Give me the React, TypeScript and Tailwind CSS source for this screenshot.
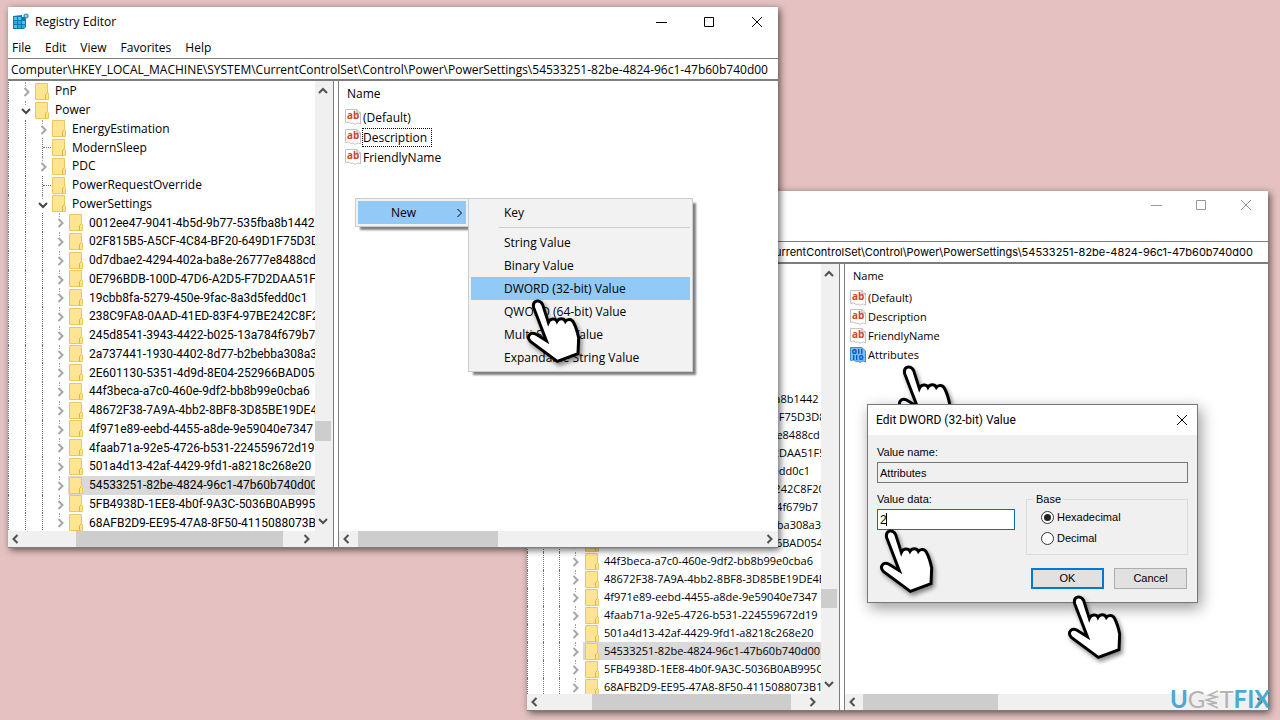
import React from 'react';
import clsx from 'clsx';

type Size = 'lg' | 'sm';

interface TreeNode {
    name: string;
    level: number;
    state: 'open' | 'closed' | 'leaf';
    selected?: boolean;
}

interface RegistryValue {
    name: string;
    kind: 'string' | 'binary';
    focused?: boolean;
}

const PATH = 'Computer\\HKEY_LOCAL_MACHINE\\SYSTEM\\CurrentControlSet\\Control\\Power\\PowerSettings\\54533251-82be-4824-96c1-47b60b740d00';

const guids = [
    '0012ee47-9041-4b5d-9b77-535fba8b1442',
    '02F815B5-A5CF-4C84-BF20-649D1F75D3D8',
    '0d7dbae2-4294-402a-ba8e-26777e8488cd',
    '0E796BDB-100D-47D6-A2D5-F7D2DAA51F51',
    '19cbb8fa-5279-450e-9fac-8a3d5fedd0c1',
    '238C9FA8-0AAD-41ED-83F4-97BE242C8F20',
    '245d8541-3943-4422-b025-13a784f679b7',
    '2a737441-1930-4402-8d77-b2bebba308a3',
    '2E601130-5351-4d9d-8E04-252966BAD054',
    '44f3beca-a7c0-460e-9df2-bb8b99e0cba6',
    '48672F38-7A9A-4bb2-8BF8-3D85BE19DE4E',
    '4f971e89-eebd-4455-a8de-9e59040e7347',
    '4faab71a-92e5-4726-b531-224559672d19',
    '501a4d13-42af-4429-9fd1-a8218c268e20',
    '54533251-82be-4824-96c1-47b60b740d00',
    '5FB4938D-1EE8-4b0f-9A3C-5036B0AB995C',
    '68AFB2D9-EE95-47A8-8F50-4115088073B1',
];

const tree: TreeNode[] = [
    { name: 'PnP', level: 0, state: 'closed' },
    { name: 'Power', level: 0, state: 'open' },
    { name: 'EnergyEstimation', level: 1, state: 'closed' },
    { name: 'ModernSleep', level: 1, state: 'leaf' },
    { name: 'PDC', level: 1, state: 'closed' },
    { name: 'PowerRequestOverride', level: 1, state: 'leaf' },
    { name: 'PowerSettings', level: 1, state: 'open' },
    ...guids.map((name): TreeNode => ({ name, level: 2, state: 'closed', selected: name.startsWith('54533251') })),
];

const firstValues: RegistryValue[] = [
    { name: '(Default)', kind: 'string' },
    { name: 'Description', kind: 'string', focused: true },
    { name: 'FriendlyName', kind: 'string' },
];

const secondValues: RegistryValue[] = [
    { name: '(Default)', kind: 'string' },
    { name: 'Description', kind: 'string' },
    { name: 'FriendlyName', kind: 'string' },
    { name: 'Attributes', kind: 'binary' },
];

const chevrons = {
    left: 'M7.5 2 3.5 6l4 4',
    right: 'M4.5 2l4 4-4 4',
    up: 'M2 8l4-4 4 4',
    down: 'M2 4l4 4 4-4',
};

function Chevron({ dir, className, width = 2 }: { dir: keyof typeof chevrons; className: string; width?: number }) {
    return (
        <svg viewBox="0 0 12 12" className={className} fill="none" stroke="currentColor" strokeWidth={width}>
            <path d={chevrons[dir]} />
        </svg>
    );
}

function AppIcon() {
    return (
        <svg viewBox="0 0 17 17" className="h-[17px] w-[17px]">
            <path d="M1 3l9-1v2h4v10l-2 2H1z" fill="#0f7ab0" />
            <path d="M2 4h3v3H2zM2 12h3v3H2zM6 4h3v3H6zM10 8h3v3h-3z" fill="#4cc3ee" />
            <path d="M2 8h3v3H2zM6 8h3v3H6zM6 12h3v3H6zM10 12h3v3h-3z" fill="#2ea9dc" />
            <circle cx="14" cy="3" r="2" fill="#8fdcf7" stroke="#1688bd" strokeWidth="1.200" />
        </svg>
    );
}

function FolderIcon() {
    return (
        <svg viewBox="0 0 14 17" className="h-[17px] w-[14px] shrink-0">
            <path d="M.5.5h12v9l1 1v6H.5z" fill="#ffe592" stroke="#ecc85c" />
            <path d="M10.500 16.500v-5l2-2" fill="none" stroke="#dfb53f" />
        </svg>
    );
}

function ValueIcon({ kind }: { kind: RegistryValue['kind'] }) {
    const binary = kind === 'binary';
    return (
        <svg viewBox="0 0 16 16" className="h-4 w-4 shrink-0">
            <path
                d="M.5.5h11.500l3.500 3.500v11l-2-1-2 .5-1.500 1-2-1.500-2 .5-2-1.500-3.500.5z"
                fill={binary ? '#7dbcf2' : '#fff'}
                stroke={binary ? '#3c8fd6' : '#c3c3c3'}
            />
            {binary ? (
                <g fill="none" stroke="#0a58c0" strokeWidth="1.400">
                    <rect x="3" y="2.700" width="3" height="3.600" rx="1" />
                    <path d="M8.700 2v5M11.700 2v5M3.700 8v5M6.700 8v5" />
                    <rect x="9.700" y="8.700" width="3" height="3.600" rx="1" />
                </g>
            ) : (
                <>
                    <path d="M12 .5v3.500h3.500" fill="none" stroke="#a8a8a8" />
                    <text x="2" y="10" className="font-['Open_Sans',sans-serif] text-[10px] font-bold" fill="#cf4526">ab</text>
                </>
            )}
        </svg>
    );
}

function Hand({ className }: { className: string }) {
    return (
        <svg viewBox="0 0 174 207" className={clsx('absolute h-[69px] w-[58px] drop-shadow-[2px_3px_2px_rgba(0,0,0,0.45)]', className)}>
            <path
                d="M23 29C18 8 42 1 50 20L67 73C72 61 88 60 93 70C99 60 113 60 118 70C124 62 137 62 142 72C151 89 155 105 158 120L156 167L94 190L13 130C0 116 13 100 29 108L61 128Z"
                fill="#fff"
                stroke="#000"
                strokeWidth="9"
            />
        </svg>
    );
}

function CaptionButtons({ size }: { size: Size }) {
    const button = clsx('flex h-full items-center justify-center', size === 'lg' ? 'w-12 text-black' : 'w-[45px] text-[#999]');
    return (
        <div className={clsx('flex h-full', size === 'lg' ? '-mr-[3px]' : '')}>
            <button aria-label="Minimize" className={button}>
                <svg viewBox="0 0 12 12" className="h-3 w-3" stroke="currentColor"><path d="M1 6.500h11" /></svg>
            </button>
            <button aria-label="Maximize" className={button}>
                <svg viewBox="0 0 12 12" className="h-3 w-3" fill="none" stroke="currentColor"><path d="M1.500 1.500h9v9h-9z" /></svg>
            </button>
            <button aria-label="Close" className={button}>
                <svg viewBox="0 0 12 12" className="h-3 w-3" stroke="currentColor"><path d="M1 1l10 10M11 1 1 11" /></svg>
            </button>
        </div>
    );
}

function TreeRow({ node, size }: { node: TreeNode; size: Size }) {
    const cell = size === 'lg' ? 'w-[17px]' : 'w-4';
    const isGuid = node.level === 2;
    return (
        <li className="flex min-h-0 items-stretch whitespace-nowrap">
            <span className={clsx('shrink-0 border-l border-dotted border-gray-500', size === 'lg' ? 'w-[9px]' : 'w-2')} />
            {Array.from({ length: node.level }, (_, i) => (
                <span key={i} className={clsx('flex shrink-0 justify-center', cell)}>
                    <span className="border-l border-dotted border-gray-500" />
                </span>
            ))}
            <span className={clsx('flex shrink-0 flex-col items-center', cell)}>
                {node.state === 'leaf' ? (
                    <span className="flex h-full w-full items-center justify-end">
                        <span className="h-full border-l border-dotted border-gray-500" />
                        <span className="w-2 border-t border-dotted border-gray-500" />
                    </span>
                ) : (
                    <>
                        <span className="h-1 border-l border-dotted border-gray-400" />
                        <Chevron
                            dir={node.state === 'open' ? 'down' : 'right'}
                            className={clsx('h-3 w-3', node.state === 'open' ? 'text-[#444]' : 'text-[#a6a6a6]')}
                        />
                    </>
                )}
            </span>
            <span className={clsx('flex flex-1 items-center', size === 'lg' ? 'gap-[6px] pl-px' : 'gap-[5px] pl-[2px]', node.selected && 'bg-[#d9d9d9]')}>
                <FolderIcon />
                <span className={size === 'lg' && isGuid ? "font-['Roboto','Open_Sans',sans-serif]" : ''}>{node.name}</span>
            </span>
        </li>
    );
}

function HScroll({ thumb }: { thumb: string }) {
    return (
        <div className="flex h-4 shrink-0 items-center justify-between bg-[#f0f0f0] text-[#505050]">
            <Chevron dir="left" className="ml-[2px] h-3 w-3 shrink-0" />
            <div className="flex h-full flex-1">
                <div className={clsx('h-full bg-[#cdcdcd]', thumb)} />
            </div>
            <Chevron dir="right" className="mr-[3px] h-3 w-3 shrink-0" />
        </div>
    );
}

function ValueTable({ values, size }: { values: RegistryValue[]; size: Size }) {
    return (
        <table className="w-full border-collapse text-left">
            <thead>
                <tr className={size === 'lg' ? 'h-[26px]' : 'h-6'}>
                    <th className="py-0 pl-2 font-normal">Name</th>
                </tr>
            </thead>
            <tbody>
                {values.map((v) => (
                    <tr key={v.name} className={size === 'lg' ? 'h-5' : 'h-[19px]'}>
                        <td className={clsx('p-0', size === 'lg' ? 'pl-[6px]' : 'pl-[5px]')}>
                            <span className="flex items-center gap-px">
                                <ValueIcon kind={v.kind} />
                                <span className={clsx('border border-dotted pr-1 leading-[17px]', v.focused ? 'border-black' : 'border-transparent')}>
                                    {v.name}
                                </span>
                            </span>
                        </td>
                    </tr>
                ))}
            </tbody>
        </table>
    );
}

function RegistryWindow({ size, values, className }: { size: Size; values: RegistryValue[]; className: string }) {
    const lg = size === 'lg';
    return (
        <section
            aria-label="Registry Editor"
            className={clsx(
                'absolute flex flex-col border-b border-[#7d7d7d] bg-white shadow-[2px_2px_7px_rgba(0,0,0,0.6)]',
                lg ? 'text-xs' : 'text-[11px]',
                className,
            )}
        >
            <header className={clsx('flex shrink-0 items-center', lg ? 'h-[29px]' : 'h-7')}>
                <div className="flex flex-1 items-center gap-[6px] pl-1">
                    <AppIcon />
                    <h1>Registry Editor</h1>
                </div>
                <CaptionButtons size={size} />
            </header>
            <nav className="flex h-[22px] shrink-0 items-center gap-[14px] pl-1 pt-px">
                {['File', 'Edit', 'View', 'Favorites', 'Help'].map((m) => (
                    <button key={m}>{m}</button>
                ))}
            </nav>
            <input
                aria-label="Registry path"
                readOnly
                value={PATH}
                className={clsx(
                    'h-[23px] w-full shrink-0 border-t border-b-2 border-[#7d7d7d] outline-none',
                    lg ? 'pl-[3px]' : "pl-1 font-['Inter','Open_Sans',sans-serif]",
                )}
            />
            <div className="flex min-h-0 flex-1">
                <div className={clsx('flex shrink-0 flex-col border-r border-[#7d7d7d] bg-[#f0f0f0]', lg ? 'w-[326px]' : 'w-[313px]')}>
                    <div className="flex min-h-0 flex-1">
                        <div className={clsx('min-w-0 flex-1 overflow-hidden bg-white', lg ? 'pt-px' : '')}>
                            <ul className={clsx('grid', lg ? 'h-[450px] auto-rows-fr' : 'auto-rows-[18px]')}>
                                {tree.map((node) => (
                                    <TreeRow key={node.name} node={node} size={size} />
                                ))}
                            </ul>
                        </div>
                        <div className="mr-[2px] flex w-4 shrink-0 flex-col items-center py-1 text-[#505050]">
                            <Chevron dir="up" className="h-3 w-3" />
                            <div className="flex w-full flex-1 flex-col justify-end">
                                <div className={clsx('bg-[#cdcdcd]', lg ? 'mb-[74px] h-5' : 'mb-[70px] h-[19px]')} />
                            </div>
                            <Chevron dir="down" className="h-3 w-3" />
                        </div>
                    </div>
                    <div className="mr-[18px]">
                        <HScroll thumb={lg ? 'ml-[54px] w-[207px]' : 'ml-[51px] w-[199px]'} />
                    </div>
                </div>
                <div className="ml-1 flex min-w-0 flex-1 flex-col border-l border-[#7d7d7d] bg-white">
                    <div className="flex-1">
                        <ValueTable values={values} size={size} />
                    </div>
                    <HScroll thumb={lg ? 'ml-[5px] w-[140px]' : 'ml-1 w-[135px]'} />
                </div>
            </div>
        </section>
    );
}

function ContextMenu() {
    const item = 'flex h-[23px] w-full items-center pl-[33px] text-left';
    return (
        <>
            <div role="menu" className="absolute left-[355px] top-[198px] w-[114px] border border-[#ccc] bg-[#f2f2f2] p-[2px] shadow-[4px_4px_2px_-1px_rgba(0,0,0,0.5)]">
                <button role="menuitem" className="flex h-[23px] w-full items-center justify-between bg-[#91c9f7] pl-[33px] pr-px">
                    New
                    <Chevron dir="right" width={1} className="h-3 w-3 text-black" />
                </button>
            </div>
            <div role="menu" className="absolute left-[468px] top-[198px] w-[225px] border border-[#ccc] bg-[#f2f2f2] p-[2px] shadow-[4px_4px_2px_-1px_rgba(0,0,0,0.5)]">
                <button role="menuitem" className={item}>Key</button>
                <hr className="my-[3px] ml-7 border-t border-[#ccc]" />
                {['String Value', 'Binary Value', 'DWORD (32-bit) Value', 'QWORD (64-bit) Value', 'Multi-String Value', 'Expandable String Value'].map((label) => (
                    <button key={label} role="menuitem" className={clsx(item, label.startsWith('DWORD') && 'bg-[#91c9f7]')}>
                        {label}
                    </button>
                ))}
            </div>
        </>
    );
}

function RadioOption({ label, checked }: { label: string; checked?: boolean }) {
    return (
        <label className="flex items-center gap-[3px]">
            <input
                type="radio"
                name="base"
                defaultChecked={checked}
                className="h-[13px] w-[13px] appearance-none rounded-full border border-[#333] bg-white p-[2px] before:block before:h-[7px] before:w-[7px] before:rounded-full checked:before:bg-[#222]"
            />
            {label}
        </label>
    );
}

function EditDialog() {
    return (
        <div
            role="dialog"
            aria-label="Edit DWORD (32-bit) Value"
            className="absolute left-[867px] top-[404px] w-[331px] border border-[#777] bg-[#f0f0f0] font-['Liberation_Sans',Arial,sans-serif] text-[11px] leading-4 shadow-[3px_5px_14px_rgba(0,0,0,0.4)]"
        >
            <div className="flex h-[30px] items-center justify-between bg-white pl-2 pr-[9px]">
                <h2 className="font-['Roboto','Open_Sans',sans-serif] text-xs">Edit DWORD (32-bit) Value</h2>
                <button aria-label="Close dialog">
                    <svg viewBox="0 0 12 12" className="h-3 w-3" stroke="#000"><path d="M1 1l10 10M11 1 1 11" /></svg>
                </button>
            </div>
            <form className="px-[9px] pb-[13px] pt-[9px]" onSubmit={(e) => e.preventDefault()}>
                <label htmlFor="value-name" className="block">Value name:</label>
                <input id="value-name" readOnly value="Attributes" className="mt-[2px] block h-[21px] w-full border border-[#777] bg-[#f0f0f0] px-[2px] outline-none" />
                <div className="mt-2 flex justify-between">
                    <div className="w-[138px]">
                        <label htmlFor="value-data" className="block">Value data:</label>
                        <div className="relative mt-[2px]">
                            <input id="value-data" defaultValue="2" className="block h-[21px] w-full border border-[#0f6cbd] bg-white px-[2px] text-xs caret-transparent outline-none" />
                            <span className="absolute left-[9px] top-1 h-[13px] w-px bg-black" />
                        </div>
                    </div>
                    <fieldset className="h-[64px] w-[162px] border border-[#dcdcdc] pl-[14px]">
                        <legend className="-ml-[7px] px-[2px]">Base</legend>
                        <div className="flex flex-col gap-[5px] pt-[2px]">
                            <RadioOption label="Hexadecimal" checked />
                            <RadioOption label="Decimal" />
                        </div>
                    </fieldset>
                </div>
                <div className="mt-[13px] flex justify-end gap-[10px] pr-px">
                    <button className="h-[21px] w-[73px] border-2 border-[#0078d7] bg-[#e1e1e1] leading-none">OK</button>
                    <button type="button" className="h-[21px] w-[73px] border border-[#adadad] bg-[#e1e1e1] leading-none">Cancel</button>
                </div>
            </form>
        </div>
    );
}

function Logo() {
    return (
        <div aria-label="UGETFIX" className="absolute left-[1170px] top-[687px] flex items-center font-['Lato',sans-serif] text-2xl font-bold leading-6 text-[#4aa9d2]">
            <span>U</span>
            <span className="font-normal text-[#b3b3b3]">G</span>
            <svg viewBox="0 0 14 20" className="h-5 w-[14px]" fill="none" stroke="#b3b3b3" strokeWidth="1.600">
                <path d="M13 2 4 6l8 2L1 11l11 3-8 1 9 4" />
            </svg>
            <span className="font-normal text-[#b3b3b3]">T</span>
            <span>FIX</span>
        </div>
    );
}

export default function App() {
    return (
        <main className="relative min-h-screen w-full overflow-hidden bg-[#e5c1c1] font-['Open_Sans','Noto_Sans',sans-serif] text-xs text-black">
            <RegistryWindow size="sm" values={secondValues} className="left-[527px] top-[191px] h-[520px] w-[741px]" />
            <RegistryWindow size="lg" values={firstValues} className="left-2 top-[7px] h-[541px] w-[770px]" />
            <ContextMenu />
            <Hand className="left-[526px] top-[298px]" />
            <Hand className="left-[897px] top-[364px]" />
            <EditDialog />
            <Hand className="left-[879px] top-[528px]" />
            <Hand className="left-[1067px] top-[594px]" />
            <Logo />
        </main>
    );
}
